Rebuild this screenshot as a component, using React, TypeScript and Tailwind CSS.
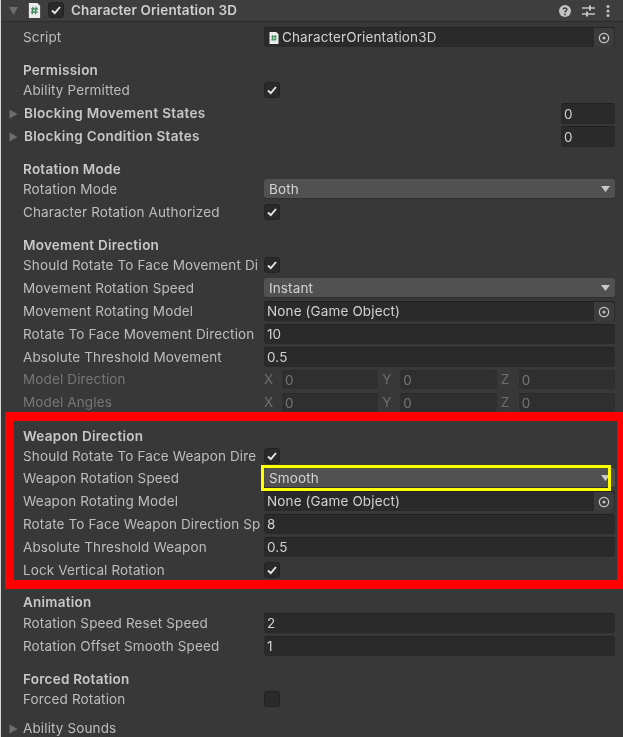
import React from 'react';

const Check = () => (
  <svg width="12" height="12" viewBox="0 0 12 12" fill="none">
    <path d="M2 6.5 L4.8 9.2 L10 3" stroke="#e6e6e6" strokeWidth="1.9" />
  </svg>
);

const Checkbox = ({ on = true }: { on?: boolean }) => (
  <div className="w-[16px] h-[16px] mb-px rounded-[3px] bg-[#2a2a2a] border border-[#232323] flex items-center justify-center">
    {on && <Check />}
  </div>
);

const ScriptIcon = ({ size = 14 }: { size?: number }) => (
  <svg width={size} height={size} viewBox="0 0 14 16" className="shrink-0">
    <path d="M1 0 H10 L13 3 V16 H1 Z" fill="#ececec" />
    <path d="M5.4 4 L4.6 12 M8.8 4 L8 12 M3.4 6.4 H10.6 M3.2 9.6 H10.4" stroke="#3f8a5a" strokeWidth="1.4" fill="none" />
  </svg>
);

const Tri = ({ down = false }: { down?: boolean }) => (
  <svg width="9" height="10" viewBox="0 0 9 10" className="shrink-0">
    {down ? <path d="M0 1 H9 L4.5 9 Z" fill="#6d6d6d" /> : <path d="M0.5 0.5 L8.5 5 L0.5 9.5 Z" fill="#6d6d6d" />}
  </svg>
);

const Target = () => (
  <div className="w-[20px] self-stretch bg-[#3c3c3c] rounded-r-[3px] flex items-center justify-center">
    <svg width="12" height="12" viewBox="0 0 12 12" fill="none">
      <circle cx="6" cy="6" r="4.7" stroke="#c4c4c4" strokeWidth="1.2" />
      <circle cx="6" cy="6" r="1.5" fill="#c4c4c4" />
    </svg>
  </div>
);

const Input = ({ value }: { value: string }) => (
  <div className="flex-1 h-[20px] mb-px rounded-[3px] bg-[#2a2a2a] border-t border-[#212121] pl-[3px] flex items-center text-[#d2d2d2]">
    {value}
  </div>
);

const ObjectField = ({ value, script = false }: { value: string; script?: boolean }) => (
  <div className="flex-1 h-[20px] mb-px rounded-[3px] bg-[#2a2a2a] border-t border-[#212121] pl-[3px] pr-px flex items-center text-[#d2d2d2] min-w-0">
    {script && <div className="ml-px mr-[2px] flex"><ScriptIcon size={12} /></div>}
    <span className="flex-1 truncate">{value}</span>
    <Target />
  </div>
);

const Dropdown = ({ value }: { value: string }) => (
  <div className="flex-1 h-[20px] mb-px rounded-[3px] bg-[#515151] border-b border-[#303030] pt-px pl-[5px] pr-[5px] flex items-center justify-between text-[#d2d2d2]">
    <span>{value}</span>
    <svg width="9" height="6" viewBox="0 0 9 6">
      <path d="M0 0 H9 L4.5 6 Z" fill="#c8c8c8" />
    </svg>
  </div>
);

const Row = ({ label, children, dim = false }: { label: string; children?: React.ReactNode; dim?: boolean }) => (
  <div className="h-[23px] flex items-center pl-[23px]">
    <div className={`w-[240px] mr-px shrink-0 whitespace-nowrap ${dim ? 'text-[#767676]' : 'text-[#bdbdbd]'}`}>{label}</div>
    {children}
  </div>
);

const Heading = ({ label }: { label: string }) => (
  <div className="h-[18px] flex items-center pl-[23px] font-semibold tracking-[0.25px] text-[#c8c8c8]">{label}</div>
);

const Foldout = ({ label, value, bold = false }: { label: string; value?: string; bold?: boolean }) => (
  <div className="h-[23px] flex items-center pl-[9px]">
    <Tri />
    <div className={`flex-1 ${bold ? 'ml-[6px] font-semibold tracking-[0.32px] text-[#c8c8c8]' : 'ml-[5px] text-[#bdbdbd]'}`}>{label}</div>
    {value && (
      <div className="w-[54px] h-[21px] mr-[8px] rounded-[3px] bg-[#2a2a2a] border-t border-[#212121] pl-[3px] flex items-center text-[#d2d2d2]">
        {value}
      </div>
    )}
  </div>
);

const VectorCell = ({ axis }: { axis: string }) => (
  <div className="flex-1 flex items-center h-[19px]">
    <span className="w-[18px] text-[#6f6f6f]">{axis}</span>
    <div className="flex-1 h-[19px] rounded-[3px] bg-[#2f2f2f] border-t border-[#2a2a2a] pl-[3px] flex items-center text-[#767676]">0</div>
  </div>
);

const Vector = () => (
  <div className="flex-1 flex gap-[4px]">
    <VectorCell axis="X" />
    <VectorCell axis="Y" />
    <VectorCell axis="Z" />
  </div>
);

export default function App() {
  return (
    <div className="relative w-[623px] h-[737px] overflow-hidden bg-[#383838] border-l border-[#d8d8d8] text-[13.5px] tracking-[0.13px] blur-[0.35px]" style={{ fontFamily: 'Inter, sans-serif' }}>
      <div className="-ml-px">
        {/* component header */}
        <div className="h-[22px] bg-[#3e3e3e] border-b border-[#2c2c2c] flex items-center pl-[9px] pr-[13px]">
          <Tri down />
          <div className="ml-[9px] flex"><ScriptIcon size={15} /></div>
          <div className="ml-[6px]"><Checkbox /></div>
          <div className="ml-[7px] flex-1 font-semibold text-[#cfcfcf]">Character Orientation 3D</div>
          <svg width="12" height="12" viewBox="0 0 12 12" className="mr-[11px]">
            <circle cx="6" cy="6" r="6" fill="#c4c4c4" />
            <path d="M4.2 4.6 C4.2 2.4 7.9 2.4 7.9 4.5 C7.9 5.9 6 5.8 6 7.4" stroke="#3e3e3e" strokeWidth="1.4" fill="none" />
            <circle cx="6" cy="9.4" r="0.9" fill="#3e3e3e" />
          </svg>
          <svg width="13" height="12" viewBox="0 0 13 12" className="mr-[11px]">
            <path d="M0 3 H13 M0 9 H13" stroke="#c4c4c4" strokeWidth="1.3" />
            <path d="M8 0.5 V5.5 M5 6.5 V11.5" stroke="#c4c4c4" strokeWidth="2" />
          </svg>
          <svg width="4" height="12" viewBox="0 0 4 12">
            <circle cx="2" cy="1.5" r="1.5" fill="#c4c4c4" />
            <circle cx="2" cy="6" r="1.5" fill="#c4c4c4" />
            <circle cx="2" cy="10.5" r="1.5" fill="#c4c4c4" />
          </svg>
        </div>

        <div className="pr-[8px]">
          <div className="mt-[4px]">
            <Row label="Script"><ObjectField value="CharacterOrientation3D" script /></Row>
          </div>

          <div className="mt-[12px]">
            <Heading label="Permission" />
            <Row label="Ability Permitted"><Checkbox /></Row>
          </div>
        </div>
        <Foldout label="Blocking Movement States" value="0" bold />
        <Foldout label="Blocking Condition States" value="0" bold />

        <div className="pr-[8px]">
          <div className="mt-[12px]">
            <Heading label="Rotation Mode" />
            <Row label="Rotation Mode"><Dropdown value="Both" /></Row>
            <Row label="Character Rotation Authorized"><Checkbox /></Row>
          </div>

          <div className="mt-[12px]">
            <Heading label="Movement Direction" />
            <Row label="Should Rotate To Face Movement Di"><Checkbox /></Row>
            <Row label="Movement Rotation Speed"><Dropdown value="Instant" /></Row>
            <Row label="Movement Rotating Model"><ObjectField value="None (Game Object)" /></Row>
            <Row label="Rotate To Face Movement Direction"><Input value="10" /></Row>
            <Row label="Absolute Threshold Movement"><Input value="0.5" /></Row>
            <div className="-translate-y-px">
              <Row label="Model Direction" dim><Vector /></Row>
              <Row label="Model Angles" dim><Vector /></Row>
            </div>
          </div>
        </div>

        {/* red annotation frame */}
        <div className="relative -mt-[3px] ml-[5px] w-[621px] h-[177px] border-[9px] border-[#ff0000] pt-[6px]">
          <div className="-ml-[14px] w-[623px] pr-[8px]">
            <Heading label="Weapon Direction" />
            <div className="-mb-px">
              <Row label="Should Rotate To Face Weapon Dire"><Checkbox /></Row>
            </div>
            <Row label="Weapon Rotation Speed">
              <div className="relative flex-1 flex">
                <Dropdown value="Smooth" />
                <div className="absolute -left-[3px] right-[4px] -top-[3px] -bottom-[2px] border-[3px] border-[#ffff00]" />
              </div>
            </Row>
            <Row label="Weapon Rotating Model"><ObjectField value="None (Game Object)" /></Row>
            <Row label="Rotate To Face Weapon Direction Sp"><Input value="8" /></Row>
            <Row label="Absolute Threshold Weapon"><Input value="0.5" /></Row>
            <Row label="Lock Vertical Rotation"><Checkbox /></Row>
          </div>
        </div>

        <div className="pr-[8px]">
          <div className="mt-[4px]">
            <Heading label="Animation" />
            <div className="mt-px">
              <Row label="Rotation Speed Reset Speed"><Input value="2" /></Row>
              <Row label="Rotation Offset Smooth Speed"><Input value="1" /></Row>
            </div>
          </div>

          <div className="mt-[12px]">
            <Heading label="Forced Rotation" />
            <Row label="Forced Rotation"><Checkbox on={false} /></Row>
          </div>
        </div>
        <div className="mt-[6px]">
          <Foldout label="Ability Sounds" />
        </div>
      </div>
    </div>
  );
}
